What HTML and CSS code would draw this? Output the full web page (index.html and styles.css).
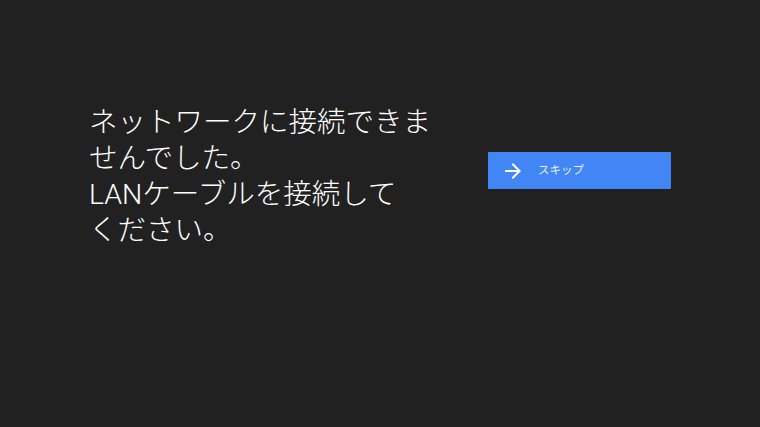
FILE: index.html
```html
<!DOCTYPE html>
<html lang="ja">
<head>
<meta charset="utf-8">
<link rel="stylesheet" href="styles.css">
</head>
<body>
<main class="screen">
  <section class="message">
    <p class="text">ネットワークに接続できませんでした。<br>LANケーブルを接続して<br>ください。</p>
  </section>
  <section class="actions">
    <button class="skip" type="button">
      <svg class="icon" viewBox="0 0 24 24" width="24" height="24" aria-hidden="true"><path d="M12 4l-1.41 1.41L16.17 11H4v2h12.17l-5.58 5.59L12 20l8-8z" fill="#fff"/></svg>
      <span class="label">スキップ</span>
    </button>
  </section>
</main>
</body>
</html>
```

FILE: styles.css
```css
html, body {
  margin: 0;
  padding: 0;
  background: #212121;
}
.screen {
  width: 760px;
  height: 427px;
  display: flex;
  align-items: flex-start;
  font-family: Roboto, "Noto Sans CJK JP", "Noto Sans", sans-serif;
  color: #fff;
}
.message {
  margin-left: 89px;
  padding-top: 105px;
  width: 355px;
}
.text {
  margin: 0;
  font-size: 28.5px;
  font-weight: 300;
  line-height: 36px;
}
.actions {
  margin-left: 44px;
  padding-top: 152px;
}
.skip {
  width: 183px;
  height: 37px;
  border: none;
  border-radius: 1px;
  background: #4285f4;
  display: flex;
  align-items: center;
  padding: 0 0 0 13px;
  gap: 13px;
  color: rgba(255,255,255,0.9);
  font-family: Roboto, "Noto Sans CJK JP", "Noto Sans", sans-serif;
  font-size: 11.5px;
}
.icon {
  width: 24px;
  height: 24px;
  flex: none;
}
.label {
  line-height: 1;
}
```
